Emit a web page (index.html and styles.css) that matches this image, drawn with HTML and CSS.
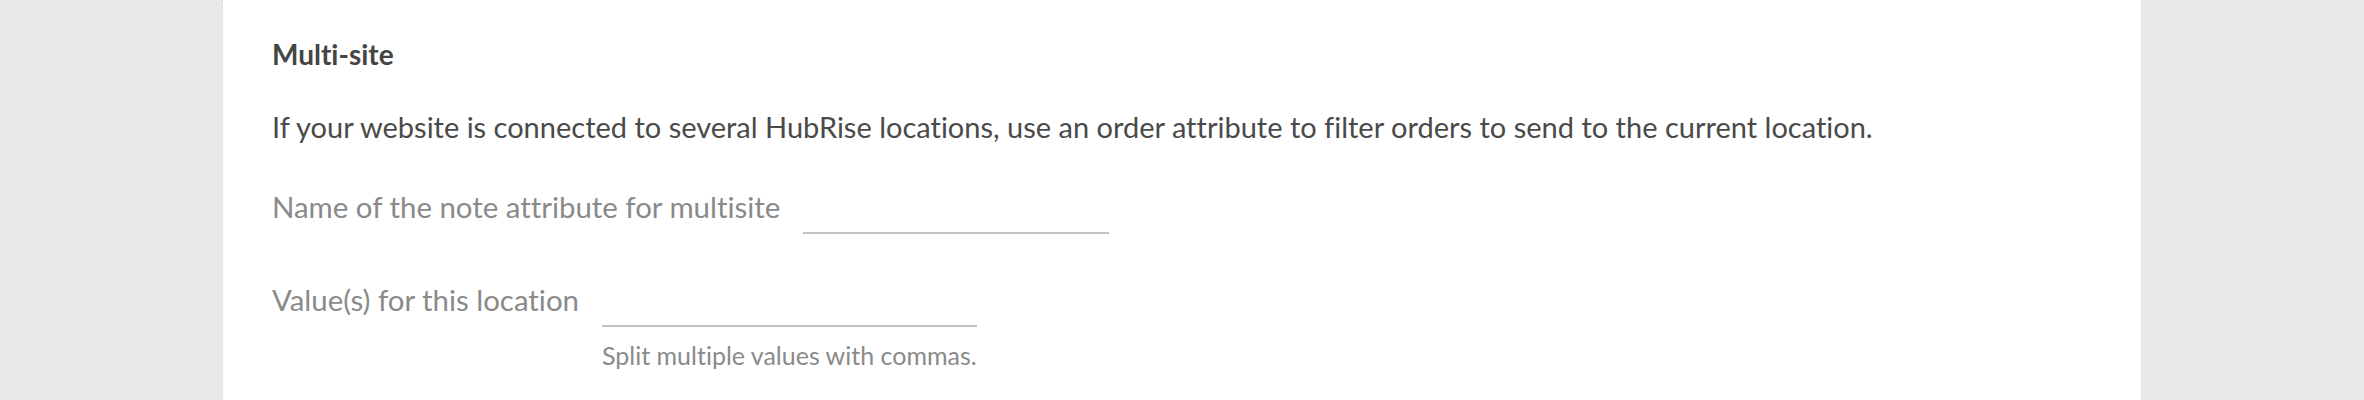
FILE: index.html
```html
<!DOCTYPE html>
<html lang="en">
<head>
<meta charset="utf-8">
<title>Multi-site</title>
<link rel="stylesheet" href="styles.css">
</head>
<body>
<main class="card">
  <h3 class="section-title">Multi-site</h3>
  <p class="intro">If your website is connected to several HubRise locations, use an order attribute to filter orders to send to the current location.</p>
  <div class="field">
    <label class="field-label" for="attr">Name of the note attribute for multisite</label>
    <div class="field-control">
      <input id="attr" class="line-input input-attr" type="text">
    </div>
  </div>
  <div class="field">
    <label class="field-label" for="vals">Value(s) for this location</label>
    <div class="field-control">
      <input id="vals" class="line-input input-vals" type="text">
      <span class="help">Split multiple values with commas.</span>
    </div>
  </div>
</main>
</body>
</html>
```
FILE: styles.css
```css
html, body {
  margin: 0;
  padding: 0;
}
body {
  background: #e8e8e8;
  font-family: "Lato", "Liberation Sans", sans-serif;
  font-variant-ligatures: none;
  height: 400px;
  overflow: hidden;
}
.card {
  box-sizing: border-box;
  width: 1920px;
  margin: 0 auto;
  min-height: 400px;
  background: #ffffff;
  border-left: 1px dotted #cfcfcf;
  border-right: 1px dotted #cfcfcf;
  padding: 34px 49px 0;
}
.section-title {
  margin: 0 0 33px;
  font-size: 28px;
  line-height: 40px;
  font-weight: 700;
  color: #454545;
}
.intro {
  margin: 0 0 39px;
  font-size: 29px;
  line-height: 40px;
  color: #4a4a4a;
}
.field {
  display: flex;
  align-items: baseline;
  gap: 23px;
  margin-bottom: 45px;
}
.field-label {
  font-size: 29.4px;
  line-height: 40px;
  color: #8a8a8a;
}
.field-control {
  display: flex;
  flex-direction: column;
}
.line-input {
  box-sizing: content-box;
  height: 40px;
  padding: 0 0 6px;
  margin: 0;
  border: 0;
  border-bottom: 2px solid #c2c2c2;
  font-family: inherit;
  font-size: 29.4px;
  color: #4a4a4a;
  background: transparent;
  outline: none;
}
.input-attr {
  width: 306px;
}
.input-vals {
  width: 375px;
}
.help {
  margin-top: 13px;
  font-size: 25px;
  line-height: 30px;
  color: #8a8a8a;
}
```
